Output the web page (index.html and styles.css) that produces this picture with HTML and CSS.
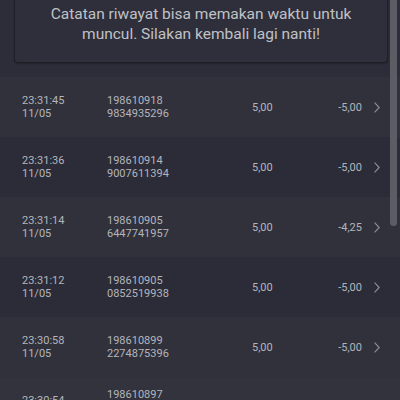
FILE: index.html
```html
<!DOCTYPE html>
<html lang="id">
<head>
  <meta charset="UTF-8">
  <meta name="viewport" content="width=device-width, initial-scale=1.0">
  <title>Riwayat</title>
  <link rel="stylesheet" href="styles.css">
</head>
<body>
  <div class="notice-wrap">
    <div class="notice">Catatan riwayat bisa memakan waktu untuk muncul. Silakan kembali lagi nanti!</div>
  </div>

  <div class="history">
    <div class="row odd">
      <div class="cell">23:31:45<br>11/05</div>
      <div class="cell">198610918<br>9834935296</div>
      <div class="cell">5,00</div>
      <div class="cell value">-5,00</div>
      <div class="chev"><svg width="6" height="11" viewBox="0 0 6 11"><polyline points="0.6,0.6 5.2,5.5 0.6,10.4" /></svg></div>
    </div>
    <div class="row">
      <div class="cell">23:31:36<br>11/05</div>
      <div class="cell">198610914<br>9007611394</div>
      <div class="cell">5,00</div>
      <div class="cell value">-5,00</div>
      <div class="chev"><svg width="6" height="11" viewBox="0 0 6 11"><polyline points="0.6,0.6 5.2,5.5 0.6,10.4" /></svg></div>
    </div>
    <div class="row odd">
      <div class="cell">23:31:14<br>11/05</div>
      <div class="cell">198610905<br>6447741957</div>
      <div class="cell">5,00</div>
      <div class="cell value">-4,25</div>
      <div class="chev"><svg width="6" height="11" viewBox="0 0 6 11"><polyline points="0.6,0.6 5.2,5.5 0.6,10.4" /></svg></div>
    </div>
    <div class="row">
      <div class="cell">23:31:12<br>11/05</div>
      <div class="cell">198610905<br>0852519938</div>
      <div class="cell">5,00</div>
      <div class="cell value">-5,00</div>
      <div class="chev"><svg width="6" height="11" viewBox="0 0 6 11"><polyline points="0.6,0.6 5.2,5.5 0.6,10.4" /></svg></div>
    </div>
    <div class="row odd">
      <div class="cell">23:30:58<br>11/05</div>
      <div class="cell">198610899<br>2274875396</div>
      <div class="cell">5,00</div>
      <div class="cell value">-5,00</div>
      <div class="chev"><svg width="6" height="11" viewBox="0 0 6 11"><polyline points="0.6,0.6 5.2,5.5 0.6,10.4" /></svg></div>
    </div>
    <div class="row last">
      <div class="cell">23:30:54<br>11/05</div>
      <div class="cell">198610897<br>5318840271<br>0000</div>
      <div class="cell">5,00</div>
      <div class="cell value">-5,00</div>
      <div class="chev"><svg width="6" height="11" viewBox="0 0 6 11"><polyline points="0.6,0.6 5.2,5.5 0.6,10.4" /></svg></div>
    </div>
  </div>

  <div class="scrollbar"></div>
</body>
</html>
```

FILE: styles.css
```css
body {
  margin: 0;
  background-color: #2c2d38;
  font-family: Roboto, "Noto Sans", sans-serif;
  overflow: hidden;
}

.notice-wrap {
  padding: 0 12px 0 14px;
}

.notice {
  background-color: #2e2f3a;
  border: 1px solid #1d1e26;
  border-top: none;
  border-radius: 0 0 4px 4px;
  box-shadow: 0 1px 2px rgba(0,0,0,0.25);
  padding: 4px 16px 18px;
  color: #c0c1c6;
  font-size: 15.5px;
  line-height: 20px;
  text-align: center;
}

.history {
  margin-top: 14px;
}

.row {
  display: grid;
  grid-template-columns: 85px 145px 1fr auto 18px;
  align-items: center;
  min-height: 60px;
  box-sizing: border-box;
  padding: 9px 20px 9px 22px;
  background-color: #2b2c38;
  color: #b4b5bc;
  font-size: 11px;
  line-height: 13px;
}

.row.odd {
  background-color: #30313b;
}

.row.last {
  background-color: #32333d;
}

.value {
  text-align: right;
}

.chev {
  display: flex;
  justify-content: flex-end;
}

.chev svg {
  display: block;
  fill: none;
  stroke: #8e8f96;
  stroke-width: 1.1;
}

.scrollbar {
  position: fixed;
  top: 0;
  right: 3px;
  width: 7px;
  height: 226px;
  background-color: #5c5d64;
  border-radius: 0 0 4px 4px;
}
```
